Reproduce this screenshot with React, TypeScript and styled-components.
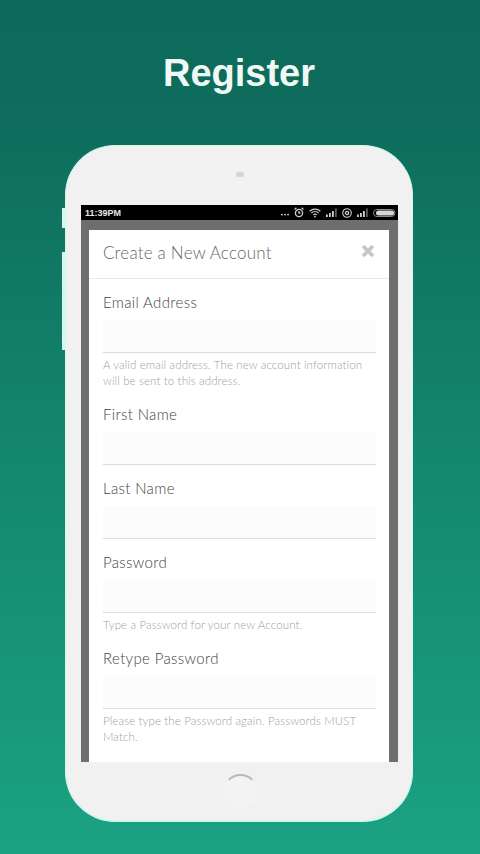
import { createGlobalStyle } from "styled-components";
import styled from "styled-components";

const GlobalStyle = createGlobalStyle`
  html, body {
    margin: 0;
    padding: 0;
  }
  * {
    box-sizing: border-box;
  }
`;

const Page = styled.div`
  width: 480px;
  height: 854px;
  overflow: hidden;
  padding: 49px 0 0 65px;
  background: linear-gradient(180deg, #0b6a5a 0%, #0e6d5c 15%, #14886f 55%, #1ba283 100%);
  font-family: "Lato", "Liberation Sans", sans-serif;
`;
const Heading = styled.h1`
  width: 348px;
  height: 48px;
  margin: 0 0 48px;
  text-align: center;
  font-family: "Liberation Sans", Arial, sans-serif;
  font-size: 38px;
  line-height: 48px;
  font-weight: 700;
  color: #f1f9f7;
`;
const Phone = styled.div`
  position: relative;
  width: 348px;
  height: 677px;
  padding: 59px 14px 0 15px;
  background: #f1f1f1;
  border: 1px solid #d0f7ec;
  border-bottom-width: 2px;
  border-radius: 50px;
`;
const SideButton = styled.div<{ $top: number; $height: number }>`
  position: absolute;
  left: -4px;
  top: ${(p) => p.$top}px;
  width: 3px;
  height: ${(p) => p.$height}px;
  background: #d8f7ef;
`;
const Speaker = styled.div`
  position: absolute;
  left: 170px;
  top: 26px;
  width: 8px;
  height: 5px;
  border-radius: 3px;
  background: #d4d4d4;
`;
const Screen = styled.div`
  height: 557px;
  overflow: hidden;
  background: #6e6e6e;
`;
const StatusBar = styled.div`
  display: flex;
  align-items: center;
  justify-content: space-between;
  height: 15px;
  padding: 0 2px 0 4px;
  background: #000;
  color: #e8e8e8;
  font-family: "Liberation Sans", Arial, sans-serif;
  font-size: 9px;
  font-weight: 700;
`;
const StatusIcons = styled.div`
  display: flex;
  align-items: center;
  gap: 5px;
  color: #cfcfcf;
`;
const Modal = styled.div`
  margin: 10px 9px 0 8px;
  background: #fff;
`;
const ModalHeader = styled.div`
  display: flex;
  align-items: center;
  justify-content: space-between;
  height: 49px;
  padding: 0 14px 3px 14px;
  border-bottom: 1px solid #e9e9e9;
`;
const ModalTitle = styled.h2`
  margin: 0;
  font-size: 17px;
  font-weight: 300;
  letter-spacing: 0.2px;
  color: #666;
`;
const CloseButton = styled.button`
  display: flex;
  width: 14px;
  height: 14px;
  margin-top: -4px;
  padding: 0;
  border: 0;
  background: none;
  color: #c6c6c6;
`;
const ModalBody = styled.form`
  padding: 11px 13px 30px 14px;
`;
const Field = styled.div`
  margin-bottom: 11px;
`;
const Label = styled.label`
  display: block;
  height: 24px;
  margin-bottom: 6px;
  font-size: 15px;
  font-weight: 300;
  line-height: 24px;
  letter-spacing: 0.35px;
  color: #444;
`;
const Input = styled.input`
  display: block;
  width: 100%;
  height: 33px;
  padding: 0 8px;
  border: 0;
  border-bottom: 1px solid #dcdcdc;
  background: #fcfcfc;
  outline: none;
`;
const Help = styled.p`
  margin: 4px 0 13px;
  font-size: 11.5px;
  font-weight: 300;
  line-height: 16px;
  letter-spacing: 0.12px;
  color: #a0a0a0;
`;
const HomeButton = styled.div`
  position: absolute;
  left: 157px;
  top: 628px;
  width: 35px;
  height: 35px;
  border-radius: 50%;
  border: 2px solid transparent;
  border-top-color: #b8b8b8;
  background: #f3f3f3;
`;

const Dots = () => (
  <svg width="8" height="10" viewBox="0 0 10 10" fill="currentColor">
    <circle cx="1.2" cy="7" r="1.2" />
    <circle cx="5" cy="7" r="1.2" />
    <circle cx="8.8" cy="7" r="1.2" />
  </svg>
);

const Alarm = () => (
  <svg width="10" height="11" viewBox="0 0 10 11" fill="none" stroke="currentColor" strokeWidth="1.3">
    <circle cx="5" cy="6" r="3.6" />
    <path d="M0.6 2.4 L2.4 0.8 M9.4 2.4 L7.6 0.8 M5 4 V6.2 H6.4" />
  </svg>
);

const Wifi = () => (
  <svg width="12" height="10" viewBox="0 0 12 10" fill="none" stroke="currentColor" strokeWidth="1.2">
    <path d="M0.6 3.2 C3.6 0.4 8.4 0.4 11.4 3.2" />
    <path d="M2.4 5 C4.4 3.2 7.6 3.2 9.6 5" />
    <path d="M4.3 6.9 C5.3 6 6.7 6 7.7 6.9" />
    <circle cx="6" cy="8.6" r="0.9" fill="currentColor" stroke="none" />
  </svg>
);

const Signal = () => (
  <svg width="11" height="9" viewBox="0 0 11 9" fill="currentColor">
    <rect x="0" y="6.5" width="1.8" height="2.5" />
    <rect x="3" y="5" width="1.8" height="4" />
    <rect x="6" y="3" width="1.8" height="6" />
    <rect x="9" y="0.5" width="1.8" height="8.5" opacity="0.45" />
  </svg>
);

const Registered = () => (
  <svg width="10" height="10" viewBox="0 0 10 10" fill="none" stroke="currentColor">
    <circle cx="5" cy="5" r="4.3" strokeWidth="1.1" />
    <circle cx="5" cy="5" r="1.6" strokeWidth="1.3" />
  </svg>
);

const Battery = () => (
  <svg width="23" height="8" viewBox="0 0 23 8">
    <rect x="0.5" y="0.5" width="21.5" height="7" rx="3.5" fill="none" stroke="#8a8a8a" />
    <rect x="3" y="1.5" width="18" height="5" rx="2.5" fill="#d8d8d8" />
  </svg>
);

const CloseIcon = () => (
  <svg width="14" height="14" viewBox="0 0 14 14" fill="none" stroke="currentColor" strokeWidth="3.6">
    <path d="M2 2 L12 12 M12 2 L2 12" />
  </svg>
);

export default function App() {
  return (
    <Page>
      <GlobalStyle />
      <Heading>Register</Heading>
      <Phone>
        <SideButton $top={62} $height={20} />
        <SideButton $top={106} $height={98} />
        <Speaker />
        <Screen>
          <StatusBar>
            <span>11:39PM</span>
            <StatusIcons>
              <Dots />
              <Alarm />
              <Wifi />
              <Signal />
              <Registered />
              <Signal />
              <Battery />
            </StatusIcons>
          </StatusBar>
          <Modal>
            <ModalHeader>
              <ModalTitle>Create a New Account</ModalTitle>
              <CloseButton type="button" aria-label="Close">
                <CloseIcon />
              </CloseButton>
            </ModalHeader>
            <ModalBody>
              <Label>Email Address</Label>
              <Input type="email" />
              <Help>
                A valid email address. The new account information will be sent to this address.
              </Help>
              <Label>First Name</Label>
              <Field>
                <Input type="text" />
              </Field>
              <Label>Last Name</Label>
              <Field>
                <Input type="text" />
              </Field>
              <Label>Password</Label>
              <Input type="password" />
              <Help>Type a Password for your new Account.</Help>
              <Label>Retype Password</Label>
              <Input type="password" />
              <Help>Please type the Password again. Passwords MUST Match.</Help>
            </ModalBody>
          </Modal>
        </Screen>
        <HomeButton />
      </Phone>
    </Page>
  );
}
